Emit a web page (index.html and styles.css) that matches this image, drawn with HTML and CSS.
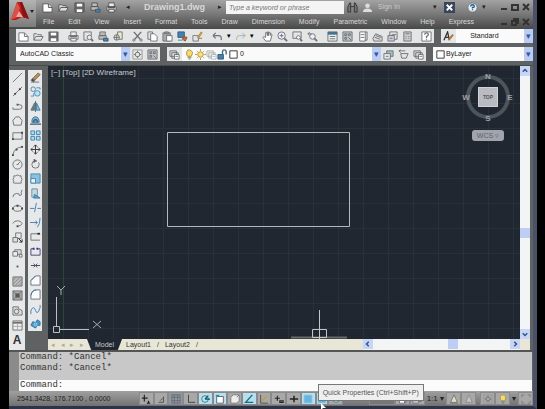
FILE: index.html
```html
<!DOCTYPE html>
<html lang="en">
<head>
    <meta charset="UTF-8">
    <meta name="viewport" content="width=device-width, initial-scale=1.0">
    <title>Drawing1.dwg</title>
    <link rel="stylesheet" href="styles.css">
</head>
<body>
    <svg class="symbols" aria-hidden="true">
        <symbol id="new" viewBox="0 0 12 12"><path d="M1 2h6l4 4v5H1z" fill="#fff"/><path d="M7 2v4h4"/></symbol>
        <symbol id="open" viewBox="0 0 12 12"><path d="M1 10V3h3l1 1h4v2M1 10l2-4h8l-2 4z"/></symbol>
        <symbol id="save" viewBox="0 0 12 12"><path d="M1 1h10v10H1z" fill="#666"/><path d="M3 2h6v3H3zM3 8h6v3H3z" fill="#fff" stroke="none"/></symbol>
        <symbol id="print" viewBox="0 0 12 12"><path d="M3 5V1h6v4M3 9H1V5h10v4H9M3 8h6v3H3z" fill="#eee"/><path d="M2 6h8" stroke-width="2"/></symbol>
        <symbol id="preview" viewBox="0 0 12 12"><path d="M5 10H1V1h8v4"/><circle cx="7" cy="7" r="2.5" fill="#e4edf2"/><path d="M9 9l2 2" stroke-width="2"/></symbol>
        <symbol id="publish" viewBox="0 0 12 12"><path d="M2 1h6v4H2zM1 5h8v4H1z" fill="#bbb"/><path d="M6 8h5v3H6z" fill="#4a86a8" stroke="#375a70"/></symbol>
        <symbol id="dwf" viewBox="0 0 12 12"><path d="M5 1h5v8H5z" fill="#e9ebc6"/><circle cx="4" cy="7" r="3" fill="#ddd"/><path d="M1 7h6M4 4v6"/></symbol>
        <symbol id="cut" viewBox="0 0 12 12"><path d="M2 1l7 8M10 1L3 9" stroke-width="1.5"/><circle cx="2" cy="10" r="1.2"/><circle cx="10" cy="10" r="1.2"/></symbol>
        <symbol id="copyclip" viewBox="0 0 12 12"><path d="M1 1h5v8H1z"/><path d="M4 3h4l3 3v5H4z" fill="#fff"/></symbol>
        <symbol id="paste" viewBox="0 0 12 12"><path d="M1 2h8v9H1z" fill="#aaa"/><path d="M5 5h6v6H5z" fill="#fff"/><path d="M3 1h4v2H3z"/></symbol>
        <symbol id="match" viewBox="0 0 12 12"><path d="M1 1h7v6H1z" fill="#4682b0" stroke="#345a78"/><path d="M7 6l4 1-2 4-3-2z" fill="#c56a3c" stroke="#875333"/><path d="M1 10h5" stroke="#4682b0"/></symbol>
        <symbol id="blockedit" viewBox="0 0 12 12"><path d="M1 5h6v6H1zM7 8h4" stroke="#777"/><path d="M6 7l4-6 1 1-4 6z" fill="#ebbd55" stroke="#a88031"/></symbol>
        <symbol id="undo" viewBox="0 0 12 12"><path d="M1 5l3-3M1 5l3 3M1 5h6q4 0 3 5" stroke-width="1.3"/></symbol>
        <symbol id="redo" viewBox="0 0 12 12"><path d="M11 5L8 2M11 5L8 8M11 5H5Q1 5 2 10" stroke="#aaa"/></symbol>
        <symbol id="hand" viewBox="0 0 12 12"><path d="M4 11L1 7l1-1 2 1V2l1-1 1 4V1h1v4l1-4 1 1v3l1-2 1 1-2 7z" fill="#fff"/></symbol>
        <symbol id="zoomrt" viewBox="0 0 12 12"><circle cx="5" cy="5" r="4" fill="#eef"/><path d="M8 8l3 3" stroke-width="2"/><path d="M3 5h4M5 3v4"/></symbol>
        <symbol id="zoomwin" viewBox="0 0 12 12"><path d="M1 1h9v7H1z"/><circle cx="7" cy="7" r="2" fill="#fff"/><path d="M9 9l2 2" stroke-width="2"/></symbol>
        <symbol id="zoomprev" viewBox="0 0 12 12"><circle cx="6" cy="6" r="3" fill="#eef"/><path d="M8 8l3 3" stroke-width="2"/><path d="M1 3h4M1 3l2-2M1 3l2 2"/></symbol>
        <symbol id="props" viewBox="0 0 12 12"><path d="M1 1h10v10H1z" fill="#e8eef0"/><path d="M1 2.5h10" stroke="#43718e" stroke-width="3"/><path d="M3 6h6M3 8.500h6"/></symbol>
        <symbol id="center" viewBox="0 0 12 12"><path d="M1 1h10v10H1z" fill="#b9c1c5"/><path d="M3 3h2v2H3zM7 3h2v2H7zM3 7h2v2H3zM7 7l3 3"/></symbol>
        <symbol id="palette" viewBox="0 0 12 12"><path d="M3 1h6v10H3z" fill="#fff"/><path d="M9 1h2v9H9M4 4h4M4 7h4"/></symbol>
        <symbol id="sheet" viewBox="0 0 12 12"><path d="M1 8l3-5 7 3v5H2z" fill="#ddd"/><path d="M3 7l6 2M4 5l6 2"/></symbol>
        <symbol id="markup" viewBox="0 0 12 12"><path d="M3 1h8v8H3z"/><path d="M1 5h7v6H1z" fill="#ccd"/><path d="M5 4h5M3 8h3"/></symbol>
        <symbol id="calc" viewBox="0 0 12 12"><path d="M2 1h8v10H2z" fill="#ccc"/><path d="M4 3h4M4 6h1M7 6h1M4 8h1M7 8h1"/></symbol>
        <symbol id="help" viewBox="0 0 12 12"><path d="M1 1h10v10H1z" fill="#fff"/><path d="M4 4q0-2 2-2t2 2q0 1-2 2v2M6 9v1" stroke-width="1.4"/></symbol>
        <symbol id="brush" viewBox="0 0 12 12"><path d="M1 10L5 1l2 9M3 7h3" stroke="#333" stroke-width="1.4"/><path d="M6 10l5-6" stroke="#a6723c" stroke-width="2"/></symbol>
        <symbol id="gear" viewBox="0 0 12 12"><path d="M1 1h10v10H1z" stroke="#999"/><circle cx="6" cy="6" r="2.500"/><path d="M6 2v2M6 8v2M2 6h2M8 6h2"/></symbol>
        <symbol id="layers" viewBox="0 0 12 12"><path d="M1 2h7v6H1zM3 4h7v6H3z" fill="#d8dfe1"/><path d="M6 6h5v5H6z" fill="#fff"/><path d="M7 8h3"/></symbol>
        <symbol id="bulb" viewBox="0 0 12 12"><path d="M4 8Q2 6 3 3t3-2 3 2-1 5z" fill="#f5dc72" stroke="#b29132"/><path d="M4 9.500h4M5 11h2"/></symbol>
        <symbol id="sun" viewBox="0 0 12 12"><circle cx="6" cy="6" r="3" fill="#f7e27c" stroke="#ae8e38"/><path d="M6 0v2M6 10v2M0 6h2M10 6h2M2 2l1 1M9 9l1 1M10 2L9 3M3 9l-1 1" stroke="#ae8e38"/></symbol>
        <symbol id="lock" viewBox="0 0 12 12"><path d="M1 6h6v5H1z" fill="#4681ac" stroke="#305c7d"/><path d="M6 6V3q0-2 2-2t2 2v3" stroke="#4d6b7d" stroke-width="1.500"/></symbol>
        <symbol id="box" viewBox="0 0 12 12"><path d="M2 2h8v8H2z" fill="#fff" stroke="#333"/></symbol>
        <symbol id="layerprev" viewBox="0 0 12 12"><path d="M4 2h7v6H4z" fill="#9fc1ca"/><path d="M1 5h7v6H1z" fill="#e5edec"/><path d="M3 8h3"/></symbol>
        <symbol id="layeriso" viewBox="0 0 12 12"><path d="M1 2h7M1 2l2-1M1 2l2 2M3 5h8l-2 5H4z"/></symbol>

        <symbol id="line" viewBox="0 0 12 12"><path d="M1 11L11 1"/></symbol>
        <symbol id="xline" viewBox="0 0 12 12"><path d="M1 11L11 1"/><path d="M3 8h1v1H3zM8 3h1v1H8z" fill="#333" stroke="#333"/></symbol>
        <symbol id="pline" viewBox="0 0 12 12"><path d="M1 9h7q3 0 3-2.500T8 4H6M1 9V7"/><path d="M5 3h2v2H5z" fill="#555" stroke="none"/></symbol>
        <symbol id="polygon" viewBox="0 0 12 12"><path d="M4 1h4l3 4-1 5H2L1 5z"/></symbol>
        <symbol id="rect" viewBox="0 0 12 12"><path d="M1 3h10v7H1z"/><path d="M0 9h2v2H0zM10 2h2v2h-2z" fill="#444" stroke="none"/></symbol>
        <symbol id="arc" viewBox="0 0 12 12"><path d="M1 11Q2 3 11 2"/><path d="M0 10h2v2H0zM4 4h2v2H4zM10 1h2v2h-2z" fill="#444" stroke="none"/></symbol>
        <symbol id="circle" viewBox="0 0 12 12"><circle cx="6" cy="6" r="5"/><path d="M6 6l3-3M5 6h2"/></symbol>
        <symbol id="cloud" viewBox="0 0 12 12"><path d="M2 4q-1-3 2-2 2-2 4 0 3-1 2 2 2 2 0 4 1 3-2 2H3q-3 0-1-2-2-2 0-4z"/></symbol>
        <symbol id="spline" viewBox="0 0 12 12"><path d="M1 10q0-4 4-4t3 2q3 1 2-3L11 2"/></symbol>
        <symbol id="ellipse" viewBox="0 0 12 12"><ellipse cx="6" cy="6" rx="5" ry="3"/><path d="M0 5h2v2H0zM10 5h2v2h-2zM5 2h2v2H5z" fill="#444" stroke="none"/></symbol>
        <symbol id="earc" viewBox="0 0 12 12"><path d="M1 6q1-3 5-3t5 3q-1 3-5 3"/><path d="M5 8h2v2H5z" fill="#444" stroke="none"/></symbol>
        <symbol id="insert" viewBox="0 0 12 12"><path d="M4 1h6v6H4z"/><path d="M1 6h5v5H1z" fill="#ddd"/><path d="M7 7l4 4M11 8v3H8" stroke="#222"/></symbol>
        <symbol id="block" viewBox="0 0 12 12"><path d="M3 3h7v5H3z" fill="#ddd"/><path d="M1 5h5v5H1zM8 8h3v3H8z" fill="#eee"/></symbol>
        <symbol id="point" viewBox="0 0 12 12"><path d="M5 5h2v2H5z" fill="#555" stroke="none"/></symbol>
        <symbol id="hatch" viewBox="0 0 12 12"><path d="M1 1h10v10H1z" fill="#bbb"/><path d="M1 5l4-4M1 9l8-8M3 11l8-8M7 11l4-4" stroke="#888"/></symbol>
        <symbol id="gradient" viewBox="0 0 12 12"><path d="M1 1h10v10H1z" fill="#aaa"/><path d="M4 4h4v4H4z" fill="#555"/><path d="M1 1l3 3M11 1L8 4M1 11l3-3M11 11L8 8"/></symbol>
        <symbol id="region" viewBox="0 0 12 12"><path d="M1 2h6v2l4 2v5H1z" fill="#ddd"/><circle cx="5" cy="7" r="2.500"/></symbol>
        <symbol id="table" viewBox="0 0 12 12"><path d="M1 1h10v10H1z" fill="#eee"/><path d="M1 3h10" stroke-width="2"/><path d="M1 7h10M6 4v7" stroke="#aaa"/></symbol>

        <symbol id="erase" viewBox="0 0 12 12"><path d="M3 7l6-6 2 2-6 6z" fill="#bb9661" stroke="#765b38"/><path d="M1 9l2-2 2 2-1 2z" fill="#444"/><path d="M1 11h9"/></symbol>
        <symbol id="copy" viewBox="0 0 12 12"><circle cx="3.500" cy="3.500" r="2.500" stroke="#478bb9"/><circle cx="8" cy="8" r="3" fill="#c5e0ee" stroke="#478bb9"/><path d="M7 2h4v2M4 8v3H1" stroke="#478bb9"/></symbol>
        <symbol id="mirror" viewBox="0 0 12 12"><path d="M5 2v8H1z" fill="#65788a"/><path d="M7 2v8h4z" fill="#85bddd" stroke="#3879a4"/><path d="M6 0v12" stroke="#377"/></symbol>
        <symbol id="offset" viewBox="0 0 12 12"><path d="M2 8q0-6 4-6t4 6z" fill="#81b5d3" stroke="#387298"/><path d="M4 8q0-3 2-3t2 3M0 10h12" stroke="#335b76" stroke-width="1.500"/></symbol>
        <symbol id="array" viewBox="0 0 12 12"><path d="M1 1h4v4H1zM7 1h4v4H7zM1 7h4v4H1zM7 7h4v4H7z" fill="#b4dbf0" stroke="#3b83af"/></symbol>
        <symbol id="move" viewBox="0 0 12 12"><path d="M6 1v10M1 6h10M4 3l2-2 2 2M4 9l2 2 2-2M3 4L1 6l2 2M9 4l2 2-2 2" stroke="#333"/></symbol>
        <symbol id="rotate" viewBox="0 0 12 12"><circle cx="6" cy="6" r="4" stroke-dasharray="20 2"/><path d="M4 0l3 2-3 2" fill="#555"/></symbol>
        <symbol id="scale" viewBox="0 0 12 12"><path d="M1 1h10v10H1z" fill="#8bc1df" stroke="#4789b0"/><path d="M1 6h5v5H1z" fill="#e6f2f7" stroke="#4789b0"/></symbol>
        <symbol id="stretch" viewBox="0 0 12 12"><path d="M2 1h6v9H2z" fill="#c0dbea" stroke="#789"/><path d="M5 7l6 4H4z" fill="#5aa5d0" stroke="#367ba3"/></symbol>
        <symbol id="trim" viewBox="0 0 12 12"><path d="M0 7h5M8 7h4" stroke="#57a"/><path d="M7 1L5 11" stroke="#3581bb"/></symbol>
        <symbol id="extend" viewBox="0 0 12 12"><path d="M0 6h8M6 4l2 2-2 2" stroke="#57a"/><path d="M11 1q0 7-3 10" stroke="#3581bb"/></symbol>
        <symbol id="breakat" viewBox="0 0 12 12"><path d="M1 10V3h8M1 10h10"/><path d="M8 2h3v2H8z" fill="#333" stroke="none"/></symbol>
        <symbol id="break" viewBox="0 0 12 12"><path d="M4 3H1v7h10V3H8" stroke="#447"/><path d="M3 2h2v2H3zM7 2h2v2H7z" fill="#338" stroke="none"/></symbol>
        <symbol id="join" viewBox="0 0 12 12"><path d="M1 6h10" stroke="#345"/><path d="M4 4l2 2-2 2M8 4L6 6l2 2" stroke="#456"/></symbol>
        <symbol id="chamfer" viewBox="0 0 12 12"><path d="M1 11V6l5-5h5v10z" fill="#f9fbfd"/><path d="M1 6l5-5" stroke="#37a"/></symbol>
        <symbol id="fillet" viewBox="0 0 12 12"><path d="M1 11V7q1-6 6-6h4v10z" fill="#f9fbfd"/><path d="M1 7q1-6 6-6" stroke="#37a"/></symbol>
        <symbol id="blend" viewBox="0 0 12 12"><path d="M1 11V7M11 1v3"/><path d="M1 7q3-6 5 0t5-3" stroke="#3581bb"/></symbol>
        <symbol id="explode" viewBox="0 0 12 12"><path d="M1 8l2-4 3 1 2-3 3 2v4L8 8l-2 3z" fill="#4996ca" stroke="#2b74a6"/><circle cx="6" cy="7" r="1.500" stroke="#b4dbf0"/></symbol>

        <symbol id="infer" viewBox="0 0 12 12"><path d="M1 5h7M4 1v8M9 8v3M7 11h4" stroke="#222" stroke-width="1.400"/></symbol>
        <symbol id="snap" viewBox="0 0 12 12"><path d="M3 10h6V3M5 8l3-3" stroke="#444"/></symbol>
        <symbol id="gridicon" viewBox="0 0 12 12"><path d="M1 1h10v10H1zM1 4h10M1 8h10M4 1v10M8 1v10" stroke="#667"/></symbol>
        <symbol id="ortho" viewBox="0 0 12 12"><path d="M3 1v9h8" stroke="#333"/></symbol>
        <symbol id="polar" viewBox="0 0 12 12"><circle cx="6" cy="6" r="4" fill="#b8e6ed" stroke="#28768b"/><path d="M6 6h6M6 6l4-4" stroke="#145466" stroke-width="1.500"/></symbol>
        <symbol id="osnap" viewBox="0 0 12 12"><path d="M2 3h8v8H2z" fill="#fff" stroke="#456"/><path d="M1 2h4" stroke="#2890b0" stroke-width="2"/></symbol>
        <symbol id="osnap3d" viewBox="0 0 12 12"><path d="M1 4l3-3h7v7l-3 3H1z" fill="#eee"/><path d="M8 4l3-3"/></symbol>
        <symbol id="otrack" viewBox="0 0 12 12"><path d="M10 1L2 10h9" stroke="#176d87" stroke-width="1.600"/></symbol>
        <symbol id="ducs" viewBox="0 0 12 12"><path d="M2 1v10h9" stroke="#444"/><path d="M3 9l7-7" stroke="#c49b3f" stroke-width="1.600"/></symbol>
        <symbol id="dyn" viewBox="0 0 12 12"><path d="M1 5h6M4 2v6M7 8h4v2H7z" stroke="#222" stroke-width="1.300"/></symbol>
        <symbol id="lwt" viewBox="0 0 12 12"><path d="M1 6h10M6 2v8" stroke="#222" stroke-width="1.800"/></symbol>
        <symbol id="qp" viewBox="0 0 12 12"><path d="M1 1h10v10H1z" fill="#68b4df" stroke="#a4d8ef"/></symbol>
        <symbol id="anno" viewBox="0 0 12 12"><path d="M6 1l4 9H2z" fill="#e6dfbc"/><path d="M1 11h10"/></symbol>
        <symbol id="annooff" viewBox="0 0 12 12"><path d="M6 1l4 9H2z" fill="#c4c4c4" stroke="#888"/></symbol>
        <symbol id="fullscreen" viewBox="0 0 12 12"><path d="M1 4V1h3M8 1h3v3M11 8v3H8M4 11H1V8" stroke="#777"/></symbol>
    </svg>

    <div class="app">
        <header class="header">
            <button class="logo" aria-label="Application menu">
                <svg viewBox="0 0 27 27"><path d="M2 20L8 2h5l7 17-7-2-6 3z" fill="#b81e1c"/><path d="M8 2L2 20l6-3 3-9z" fill="#da5147"/><path d="M11 2h2l7 17-6-2z" fill="#861413"/><path d="M7 17l3-6 4 6z" fill="#f0a49b"/><path d="M21 10h4l-2 3z" fill="#222"/></svg>
            </button>
            <div class="header-rows">
                <div class="titlebar">
                    <div class="quick">
                        <button aria-label="New"><svg class="icon"><use href="#new"/></svg></button>
                        <button aria-label="Open"><svg class="icon"><use href="#open"/></svg></button>
                        <button aria-label="Save"><svg class="icon"><use href="#save"/></svg></button>
                        <button aria-label="Save as"><svg class="icon"><use href="#publish"/></svg></button>
                        <button aria-label="Plot"><svg class="icon"><use href="#print"/></svg></button>
                        <button aria-label="More">◂</button>
                    </div>
                    <h1>Drawing1.dwg</h1>
                    <button class="play" aria-label="Expand search">▸</button>
                    <input class="search" type="search" placeholder="Type a keyword or phrase" aria-label="Search">
                    <button class="tool" aria-label="Find"><svg class="icon" viewBox="0 0 12 12"><path d="M1 11V5l2-4h1v10zM8 11V1h1l2 4v6zM4 5h4" fill="#777" stroke="#333"/></svg></button>
                    <button class="tool" aria-label="Account"><svg class="icon" viewBox="0 0 12 12"><circle cx="6" cy="4" r="2.500" fill="#ddd" stroke="none"/><path d="M1 11q0-4 5-4t5 4z" fill="#ddd" stroke="none"/></svg></button>
                    <a class="signin" href="#">Sign In</a>
                    <button class="tool push" aria-label="Sign in menu">▾</button>
                    <button class="tool" aria-label="Exchange"><svg class="icon" viewBox="0 0 12 12"><path d="M0 0h12v12H0z" fill="#39465a" stroke="none"/><path d="M3 3l6 6M9 3L3 9" stroke="#fff" stroke-width="2"/></svg></button>
                    <button class="tool info" aria-label="Help"><svg class="icon" viewBox="0 0 12 12"><circle cx="6" cy="6" r="5" fill="#e7edf2" stroke="#6d7d8e"/><path d="M4 5q0-2 2-2t2 2q0 1-2 1v1M6 8v1" stroke="#24577e" stroke-width="1.400"/></svg></button>
                    <button class="play" aria-label="Help menu">▾</button>
                    <div class="winbtns">
                        <button aria-label="Minimize"><svg viewBox="0 0 8 8"><path d="M1 6h6"/></svg></button>
                        <button aria-label="Restore"><svg viewBox="0 0 8 8"><path d="M1 2h6v5H1zM1 2h6"/></svg></button>
                        <button aria-label="Close"><svg viewBox="0 0 8 8"><path d="M1 1l6 6M7 1L1 7"/></svg></button>
                    </div>
                </div>
                <nav class="menubar">
                    <a href="#">File</a><a href="#">Edit</a><a href="#">View</a><a href="#">Insert</a><a href="#">Format</a><a href="#">Tools</a><a href="#">Draw</a><a href="#">Dimension</a><a href="#">Modify</a><a href="#">Parametric</a><a href="#">Window</a><a href="#">Help</a><a href="#">Express</a>
                    <div class="winbtns">
                        <button aria-label="Minimize drawing"><svg viewBox="0 0 8 8"><path d="M1 6h6"/></svg></button>
                        <button aria-label="Restore drawing"><svg viewBox="0 0 8 8"><path d="M1 3h4v4H1zM3 3V1h4v4H5"/></svg></button>
                        <button aria-label="Close drawing"><svg viewBox="0 0 8 8"><path d="M1 1l6 6M7 1L1 7"/></svg></button>
                    </div>
                </nav>
            </div>
        </header>

        <div class="toolrow">
            <div class="bar standard">
                <button aria-label="New"><svg class="icon"><use href="#new"/></svg></button>
                <button aria-label="Open"><svg class="icon"><use href="#open"/></svg></button>
                <button aria-label="Save"><svg class="icon"><use href="#save"/></svg></button>
                <i></i>
                <button aria-label="Plot"><svg class="icon"><use href="#print"/></svg></button>
                <button aria-label="Plot preview"><svg class="icon"><use href="#preview"/></svg></button>
                <button aria-label="Publish"><svg class="icon"><use href="#publish"/></svg></button>
                <button aria-label="3D DWF"><svg class="icon"><use href="#dwf"/></svg></button>
                <i></i>
                <button aria-label="Cut"><svg class="icon"><use href="#cut"/></svg></button>
                <button aria-label="Copy"><svg class="icon"><use href="#copyclip"/></svg></button>
                <button aria-label="Paste"><svg class="icon"><use href="#paste"/></svg></button>
                <button aria-label="Match properties"><svg class="icon"><use href="#match"/></svg></button>
                <button aria-label="Block editor"><svg class="icon"><use href="#blockedit"/></svg></button>
                <i></i>
                <button aria-label="Undo"><svg class="icon"><use href="#undo"/></svg></button>
                <button class="drop" aria-label="Undo list">▾</button>
                <button aria-label="Redo"><svg class="icon"><use href="#redo"/></svg></button>
                <button class="drop" aria-label="Redo list">▾</button>
                <i></i>
                <button aria-label="Pan"><svg class="icon"><use href="#hand"/></svg></button>
                <button aria-label="Zoom realtime"><svg class="icon"><use href="#zoomrt"/></svg></button>
                <button aria-label="Zoom window"><svg class="icon"><use href="#zoomwin"/></svg></button>
                <button aria-label="Zoom previous"><svg class="icon"><use href="#zoomprev"/></svg></button>
                <i></i>
                <button aria-label="Properties"><svg class="icon"><use href="#props"/></svg></button>
                <button aria-label="DesignCenter"><svg class="icon"><use href="#center"/></svg></button>
                <button aria-label="Tool palettes"><svg class="icon"><use href="#palette"/></svg></button>
                <button aria-label="Sheet set"><svg class="icon"><use href="#sheet"/></svg></button>
                <button aria-label="Markup set"><svg class="icon"><use href="#markup"/></svg></button>
                <button aria-label="Calculator"><svg class="icon"><use href="#calc"/></svg></button>
                <i></i>
                <button aria-label="Help"><svg class="icon"><use href="#help"/></svg></button>
            </div>
            <div class="bar styles">
                <button aria-label="Text style"><svg class="icon"><use href="#brush"/></svg></button>
                <label class="combo"><select class="style" aria-label="Text style"><option>Standard</option></select></label>
            </div>
        </div>

        <div class="toolrow">
            <div class="bar workspaces">
                <label class="combo"><select aria-label="Workspace"><option>AutoCAD Classic</option></select></label>
                <button aria-label="Workspace settings"><svg class="icon"><use href="#gear"/></svg></button>
                <button aria-label="My workspace"><svg class="icon"><use href="#center"/></svg></button>
            </div>
            <div class="bar layerbar">
                <button aria-label="Layer properties"><svg class="icon"><use href="#layers"/></svg></button>
                <label class="combo">
                    <span class="marks"><svg class="icon"><use href="#bulb"/></svg><svg class="icon"><use href="#sun"/></svg><svg class="icon faint"><use href="#layers"/></svg><svg class="icon"><use href="#lock"/></svg><svg class="icon"><use href="#box"/></svg></span>
                    <select class="layer" aria-label="Layer"><option>0</option></select>
                </label>
                <button aria-label="Make current"><svg class="icon"><use href="#layerprev"/></svg></button>
                <button aria-label="Layer previous"><svg class="icon"><use href="#layeriso"/></svg></button>
                <button aria-label="Layer states"><svg class="icon"><use href="#layers"/></svg></button>
            </div>
            <div class="bar colorbar">
                <label class="combo">
                    <span class="marks"><svg class="icon"><use href="#box"/></svg></span>
                    <select class="color" aria-label="Color"><option>ByLayer</option></select>
                </label>
            </div>
        </div>

        <main class="workspace">
            <div class="tools draw">
                <button aria-label="Line"><svg class="icon"><use href="#line"/></svg></button>
                <button aria-label="Construction line"><svg class="icon"><use href="#xline"/></svg></button>
                <button aria-label="Polyline"><svg class="icon"><use href="#pline"/></svg></button>
                <button aria-label="Polygon"><svg class="icon"><use href="#polygon"/></svg></button>
                <button aria-label="Rectangle"><svg class="icon"><use href="#rect"/></svg></button>
                <button aria-label="Arc"><svg class="icon"><use href="#arc"/></svg></button>
                <button aria-label="Circle"><svg class="icon"><use href="#circle"/></svg></button>
                <button aria-label="Revision cloud"><svg class="icon"><use href="#cloud"/></svg></button>
                <button aria-label="Spline"><svg class="icon"><use href="#spline"/></svg></button>
                <button aria-label="Ellipse"><svg class="icon"><use href="#ellipse"/></svg></button>
                <button aria-label="Ellipse arc"><svg class="icon"><use href="#earc"/></svg></button>
                <button aria-label="Insert block"><svg class="icon"><use href="#insert"/></svg></button>
                <button aria-label="Make block"><svg class="icon"><use href="#block"/></svg></button>
                <button aria-label="Point"><svg class="icon"><use href="#point"/></svg></button>
                <button aria-label="Hatch"><svg class="icon"><use href="#hatch"/></svg></button>
                <button aria-label="Gradient"><svg class="icon"><use href="#gradient"/></svg></button>
                <button aria-label="Region"><svg class="icon"><use href="#region"/></svg></button>
                <button aria-label="Table"><svg class="icon"><use href="#table"/></svg></button>
                <button class="mtext" aria-label="Multiline text">A</button>
            </div>
            <div class="tools modify">
                <button aria-label="Erase"><svg class="icon"><use href="#erase"/></svg></button>
                <button aria-label="Copy"><svg class="icon"><use href="#copy"/></svg></button>
                <button aria-label="Mirror"><svg class="icon"><use href="#mirror"/></svg></button>
                <button aria-label="Offset"><svg class="icon"><use href="#offset"/></svg></button>
                <button aria-label="Array"><svg class="icon"><use href="#array"/></svg></button>
                <button aria-label="Move"><svg class="icon"><use href="#move"/></svg></button>
                <button aria-label="Rotate"><svg class="icon"><use href="#rotate"/></svg></button>
                <button aria-label="Scale"><svg class="icon"><use href="#scale"/></svg></button>
                <button aria-label="Stretch"><svg class="icon"><use href="#stretch"/></svg></button>
                <button aria-label="Trim"><svg class="icon"><use href="#trim"/></svg></button>
                <button aria-label="Extend"><svg class="icon"><use href="#extend"/></svg></button>
                <button aria-label="Break at point"><svg class="icon"><use href="#breakat"/></svg></button>
                <button aria-label="Break"><svg class="icon"><use href="#break"/></svg></button>
                <button aria-label="Join"><svg class="icon"><use href="#join"/></svg></button>
                <button aria-label="Chamfer"><svg class="icon"><use href="#chamfer"/></svg></button>
                <button aria-label="Fillet"><svg class="icon"><use href="#fillet"/></svg></button>
                <button aria-label="Blend curves"><svg class="icon"><use href="#blend"/></svg></button>
                <button aria-label="Explode"><svg class="icon"><use href="#explode"/></svg></button>
            </div>

            <div class="viewer">
                <div class="view">
                    <div class="canvas">
                        <svg class="drawing" viewBox="0 0 472 273" preserveAspectRatio="xMinYMax slice">
                            <path d="M15.500 0v263" stroke="#244a2f"/>
                            <path d="M119.500 66.500h182v94h-182z" stroke="#b4b8bb"/>
                            <path d="M8.500 231v29M11 263.500h30M5.500 260.500h6v6h-6z" stroke="#b9bfc2"/>
                            <path d="M9 220l4 4 4-4M13 224v5M45 255l8 7M53 255l-8 7" stroke="#a6adb1"/>
                            <path d="M243 271.500h56" stroke="#666a69" stroke-width="2"/>
                            <path d="M271.500 244v29M264.500 263.500h14v8h-14z" stroke="#c3c7ca"/>
                        </svg>
                        <div class="viewlabel">[−] [Top] [2D Wireframe]</div>
                        <div class="compass">
                            <svg viewBox="0 0 52 52">
                                <circle cx="26" cy="26" r="20" fill="none" stroke="#4d555c" stroke-width="4"/>
                                <path d="M16 16h20v20H16z" fill="#babbc2"/>
                                <path d="M16.500 16.500h19v19h-19z" fill="none" stroke="#d1d2d8"/>
                                <text x="26" y="8">N</text><text x="48" y="29">E</text><text x="26" y="50">S</text><text x="4" y="29">W</text>
                                <text class="face" x="26" y="28">TOP</text>
                            </svg>
                            <button class="wcs">WCS ▿</button>
                        </div>
                    </div>
                    <div class="vscroll">
                        <button aria-label="Scroll up"><svg viewBox="0 0 8 8"><path d="M1 5l3-3 3 3"/></svg></button>
                        <span class="thumb"></span>
                        <button aria-label="Scroll down"><svg viewBox="0 0 8 8"><path d="M1 3l3 3 3-3"/></svg></button>
                    </div>
                </div>
                <div class="tabs">
                    <div class="tabnav"><button aria-label="First">◂</button><button aria-label="Previous">◂</button><button aria-label="Next">▸</button><button aria-label="Last">▸</button></div>
                    <a class="current" href="#">Model</a><a href="#">Layout1</a><b>/</b><a href="#">Layout2</a><b>/</b>
                    <div class="hscroll">
                        <button aria-label="Scroll left"><svg viewBox="0 0 8 8"><path d="M5 1L2 4l3 3"/></svg></button>
                        <span class="thumb"></span>
                        <button aria-label="Scroll right"><svg viewBox="0 0 8 8"><path d="M3 1l3 3-3 3"/></svg></button>
                    </div>
                </div>
            </div>
        </main>

        <section class="command">
            <div class="grip"></div>
            <div class="console">
                <div class="history"><p>Command: *Cancel*</p><p>Command: *Cancel*</p></div>
                <div class="prompt"><label for="cmd">Command:</label><input id="cmd" type="text"></div>
            </div>
        </section>

        <footer class="status">
            <span class="coords">2541.3428, 176.7100 , 0.0000</span>
            <div class="modes">
                <button aria-label="Infer constraints"><svg class="icon"><use href="#infer"/></svg></button>
                <button aria-label="Snap"><svg class="icon"><use href="#snap"/></svg></button>
                <button class="dim" aria-label="Grid"><svg class="icon"><use href="#gridicon"/></svg></button>
                <button aria-label="Ortho"><svg class="icon"><use href="#ortho"/></svg></button>
                <button class="on" aria-label="Polar"><svg class="icon"><use href="#polar"/></svg></button>
                <button class="on" aria-label="Object snap"><svg class="icon"><use href="#osnap"/></svg></button>
                <button aria-label="3D object snap"><svg class="icon"><use href="#osnap3d"/></svg></button>
                <button class="on" aria-label="Object snap tracking"><svg class="icon"><use href="#otrack"/></svg></button>
                <button aria-label="Dynamic UCS"><svg class="icon"><use href="#ducs"/></svg></button>
                <button aria-label="Dynamic input"><svg class="icon"><use href="#dyn"/></svg></button>
                <button aria-label="Lineweight"><svg class="icon"><use href="#lwt"/></svg></button>
                <button class="on" aria-label="Transparency"><svg class="icon"><use href="#qp"/></svg></button>
                <div class="tipped">
                    <button class="on" aria-label="Quick Properties"><svg class="icon"><use href="#qp"/></svg></button>
                    <div class="tooltip">Quick Properties (Ctrl+Shift+P)</div>
                    <svg class="cursor" viewBox="0 0 6 8"><path d="M1 0v7l2-2h3z" fill="#fff"/></svg>
                </div>
                <button aria-label="Selection cycling"><svg class="icon"><use href="#polar"/></svg></button>
            </div>
            <div class="right">
                <button class="space" aria-label="Model space"></button>
                <button aria-label="Quick view layouts"><svg class="icon"><use href="#palette"/></svg></button>
                <button aria-label="Quick view drawings"><svg class="icon"><use href="#markup"/></svg></button>
                <button class="scale">1:1 ▾</button>
                <button aria-label="Annotation visibility"><svg class="icon"><use href="#anno"/></svg></button>
                <button aria-label="Annotation scale"><svg class="icon"><use href="#annooff"/></svg></button>
                <i></i>
                <button aria-label="Workspace switching"><svg class="icon"><use href="#gear"/></svg></button>
                <button aria-label="Isolate objects"><svg class="icon"><use href="#bulb"/></svg></button>
                <button class="scale" aria-label="Status menu">▾</button>
                <button aria-label="Clean screen"><svg class="icon"><use href="#fullscreen"/></svg></button>
            </div>
        </footer>
    </div>
</body>
</html>
```

FILE: styles.css
```css
* {
    box-sizing: border-box;
}
body {
    margin: 0;
    background-color: #000;
    font-family: "Liberation Sans", Arial, sans-serif;
    font-size: 7px;
    line-height: 10px;
}
button {
    border: 0;
    padding: 0;
    background: none;
    font: inherit;
    color: inherit;
    display: flex;
    align-items: center;
    justify-content: center;
}
a {
    color: inherit;
    text-decoration: none;
}
p {
    margin: 0;
}
.symbols {
    display: none;
}
.icon {
    width: 11px;
    height: 11px;
    flex: none;
    fill: none;
    stroke: #6e7173;
    stroke-width: 1;
}
.app {
    display: flex;
    flex-direction: column;
    min-height: 100vh;
    margin: 0 8px 0 9px;
    background-color: #5f6263;
    border-right: 4px solid #4b5268;
    border-bottom: 3px solid #2c3547;
}

/* title and menus */
.header {
    display: flex;
    height: 29px;
    background: linear-gradient(#a3a3a3, #777 50%, #484848);
    color: #d8d8d8;
}
.logo {
    width: 27px;
    height: 27px;
    background: linear-gradient(#b4b4b4, #7c7c7c);
}
.logo svg {
    width: 27px;
    height: 27px;
}
.header-rows {
    flex: 1;
    min-width: 0;
}
.titlebar {
    display: flex;
    align-items: center;
    height: 14px;
}
.quick {
    display: flex;
    padding-left: 4px;
    gap: 1px;
}
.quick button {
    width: 15px;
    color: #222;
}
.quick .icon {
    fill: #ddd;
    stroke: #555;
}
h1 {
    margin: 0 0 0 9px;
    font-size: 9px;
    line-height: 12px;
    width: 72px;
}
.play {
    width: 8px;
    margin-right: 2px;
    color: #222;
}
.search {
    width: 118px;
    height: 13px;
    margin-right: 1px;
    padding: 0 3px;
    border: 0;
    background-color: #f4f4f4;
    font: italic 7px/12px "Liberation Sans", Arial, sans-serif;
}
.search::placeholder {
    color: #777;
}
.tool {
    width: 15px;
}
.signin {
    color: #c9c9c9;
    margin-left: 3px;
}
.push {
    margin-left: auto;
    color: #222;
}
.info {
    margin-left: 8px;
}
.winbtns {
    display: flex;
    gap: 3px;
    margin-left: auto;
    padding-right: 3px;
}
.titlebar .winbtns {
    margin-left: 10px;
}
.winbtns svg {
    width: 8px;
    height: 8px;
    fill: none;
    stroke: #333;
    stroke-width: 2;
}
.menubar {
    display: flex;
    align-items: center;
    gap: 14px;
    height: 15px;
    padding-left: 7px;
}

/* toolbars */
.toolrow {
    display: flex;
    gap: 7px;
    height: 18px;
    padding: 0 0 4px 7px;
}
.bar {
    display: flex;
    align-items: stretch;
    background-color: #e4e5e5;
    min-width: 0;
}
.bar button {
    width: 15px;
    flex: none;
}
.bar i {
    flex: 1;
}
.standard {
    flex: 419 1 0;
}
.standard .drop {
    width: 8px;
}
.styles {
    flex: 92 1 0;
}
.workspaces {
    flex: 144 1 0;
}
.layerbar {
    flex: 259 1 0;
}
.colorbar {
    flex: 100 1 0;
}
.combo {
    position: relative;
    flex: 1;
    min-width: 0;
    display: flex;
    background-color: #fafafa;
}
.combo::after {
    content: "▾";
    width: 9px;
    flex: none;
    background-color: #bccdf3;
    color: #35569b;
    font-size: 9px;
    line-height: 14px;
    text-align: center;
}
.combo select {
    appearance: none;
    flex: 1;
    min-width: 0;
    border: 0;
    padding: 0 4px;
    background: none;
    color: #222;
    font: 7px/14px "Liberation Sans", Arial, sans-serif;
}
.combo select.style {
    padding-left: 14px;
}
.combo select.layer {
    padding-left: 58px;
}
.combo select.color {
    padding-left: 13px;
}
.marks {
    position: absolute;
    left: 2px;
    top: 2px;
    display: flex;
    pointer-events: none;
}
.faint {
    opacity: 0.5;
}

/* drawing area */
.workspace {
    flex: 1;
    display: flex;
    border-top: 1px solid #484b4c;
}
.tools {
    display: grid;
    grid-auto-rows: 1fr;
    justify-items: center;
    background-color: #e6e8e9;
}
.draw {
    width: 16px;
    margin: 4px 3px 0 0;
    padding-bottom: 3px;
}
.modify {
    width: 14px;
    margin: 4px 6px 19px 0;
}
.tools button {
    min-height: 0;
    height: 100%;
}
.mtext {
    font-size: 12px;
    font-weight: bold;
    color: #333;
}
.viewer {
    flex: 1;
    min-width: 0;
    display: flex;
    flex-direction: column;
    padding-right: 3px;
}
.view {
    flex: 1;
    display: flex;
}
.canvas {
    position: relative;
    flex: 1;
    overflow: hidden;
    background-color: #202731;
    background-image: linear-gradient(#28303a 1px, transparent 1px), linear-gradient(90deg, #28303a 1px, transparent 1px);
    background-size: 25px 25px;
    background-position: 15px 12px;
}
.drawing {
    position: absolute;
    left: 0;
    bottom: 0;
    width: 100%;
    height: 100%;
    fill: none;
}
.viewlabel {
    position: absolute;
    left: 3px;
    top: 2px;
    color: #c5c9cc;
    font-size: 8px;
}
.compass {
    position: absolute;
    right: 6px;
    top: 5px;
    width: 52px;
    display: flex;
    flex-direction: column;
    align-items: center;
    gap: 7px;
}
.compass svg {
    width: 52px;
    height: 52px;
}
.compass text {
    fill: #9da1a6;
    font-size: 8px;
    font-weight: bold;
    text-anchor: middle;
}
.compass text.face {
    fill: #555;
    font-size: 5px;
}
.wcs {
    width: 32px;
    height: 11px;
    border-radius: 3px;
    background-color: #a2a4ad;
    color: #5d616c;
}
.vscroll {
    width: 10px;
    display: flex;
    flex-direction: column;
    background-color: #f3f4f5;
}
.vscroll button, .hscroll button {
    width: 10px;
    height: 10px;
    background-color: #c7d5f6;
}
.vscroll svg, .hscroll svg {
    width: 6px;
    height: 6px;
    fill: none;
    stroke: #38528e;
    stroke-width: 2;
}
.thumb {
    width: 10px;
    height: 10px;
    background-color: #bdcdf3;
}
.vscroll .thumb {
    margin: auto 0 91px;
}
.tabs {
    display: flex;
    height: 11px;
    background-color: #e8e6d6;
    color: #333;
    line-height: 11px;
}
.tabnav {
    display: flex;
    width: 39px;
    justify-content: space-around;
    color: #aaa99d;
}
.tabs a {
    padding: 0 4px;
}
.tabs b {
    font-weight: normal;
    padding: 0 2px;
}
.tabs a.current {
    padding: 0 8px;
    background-color: #202731;
    color: #c5c9cc;
    clip-path: polygon(0 0, 100% 0, 88% 100%, 12% 100%);
}
.hscroll {
    display: flex;
    width: 157px;
    margin-left: auto;
    margin-right: 10px;
    background-color: #f3f4f5;
}
.hscroll .thumb {
    margin-left: auto;
    margin-right: 52px;
}

/* command line */
.command {
    display: flex;
    height: 41px;
    border-top: 2px solid #555;
}
.grip {
    width: 10px;
    background-color: #8b8b8b;
}
.console {
    flex: 1;
    display: flex;
    flex-direction: column;
    margin-right: 1px;
    background-color: #c8c8c8;
    color: #333;
    font: 9px/11px "Liberation Mono", "Courier New", monospace;
}
.history {
    flex: 1;
    padding: 0 1px;
}
.prompt {
    display: flex;
    height: 11px;
    padding: 0 1px;
    background-color: #fbfbfb;
}
.prompt input {
    flex: 1;
    border: 0;
    padding: 0 4px;
    background: none;
    font: inherit;
    outline: none;
}

/* status bar */
.status {
    display: flex;
    align-items: center;
    height: 15px;
    background: linear-gradient(#a0a0a0, #717171);
    color: #222;
}
.coords {
    width: 130px;
    padding-left: 8px;
}
.modes, .right {
    display: flex;
}
.modes {
    width: 204px;
}
.modes > * {
    flex: 1;
}
.modes button, .right button {
    height: 13px;
    border: 1px solid #8a8a8a;
    background-color: #a8a8a8;
}
.right button {
    width: 15px;
}
.modes .icon, .right .icon {
    width: 10px;
    height: 10px;
}
.modes button.on {
    background-color: #b7dfec;
}
.modes button.dim {
    background-color: #8f999e;
}
.right {
    margin-left: auto;
}
.right i {
    width: 4px;
}
.right button.space {
    width: 26px;
    background-color: #777;
}
.right button.scale {
    width: auto;
    border: 0;
    background: none;
    padding: 0 2px;
    font-size: 8px;
}
.tipped {
    position: relative;
}
.tipped button {
    width: 100%;
}
.tooltip {
    position: absolute;
    left: 2px;
    bottom: 4px;
    padding: 2px 4px;
    border: 1px solid #777;
    background-color: #efefef;
    color: #555;
    line-height: 11px;
    white-space: nowrap;
}
.cursor {
    position: absolute;
    left: 4px;
    top: 11px;
    width: 6px;
    height: 8px;
}
@media (max-width: 480px) {
    .menubar {
        gap: 8px;
    }
    .hscroll {
        width: 90px;
    }
    .hscroll .thumb {
        margin-right: 20px;
    }
}
```
